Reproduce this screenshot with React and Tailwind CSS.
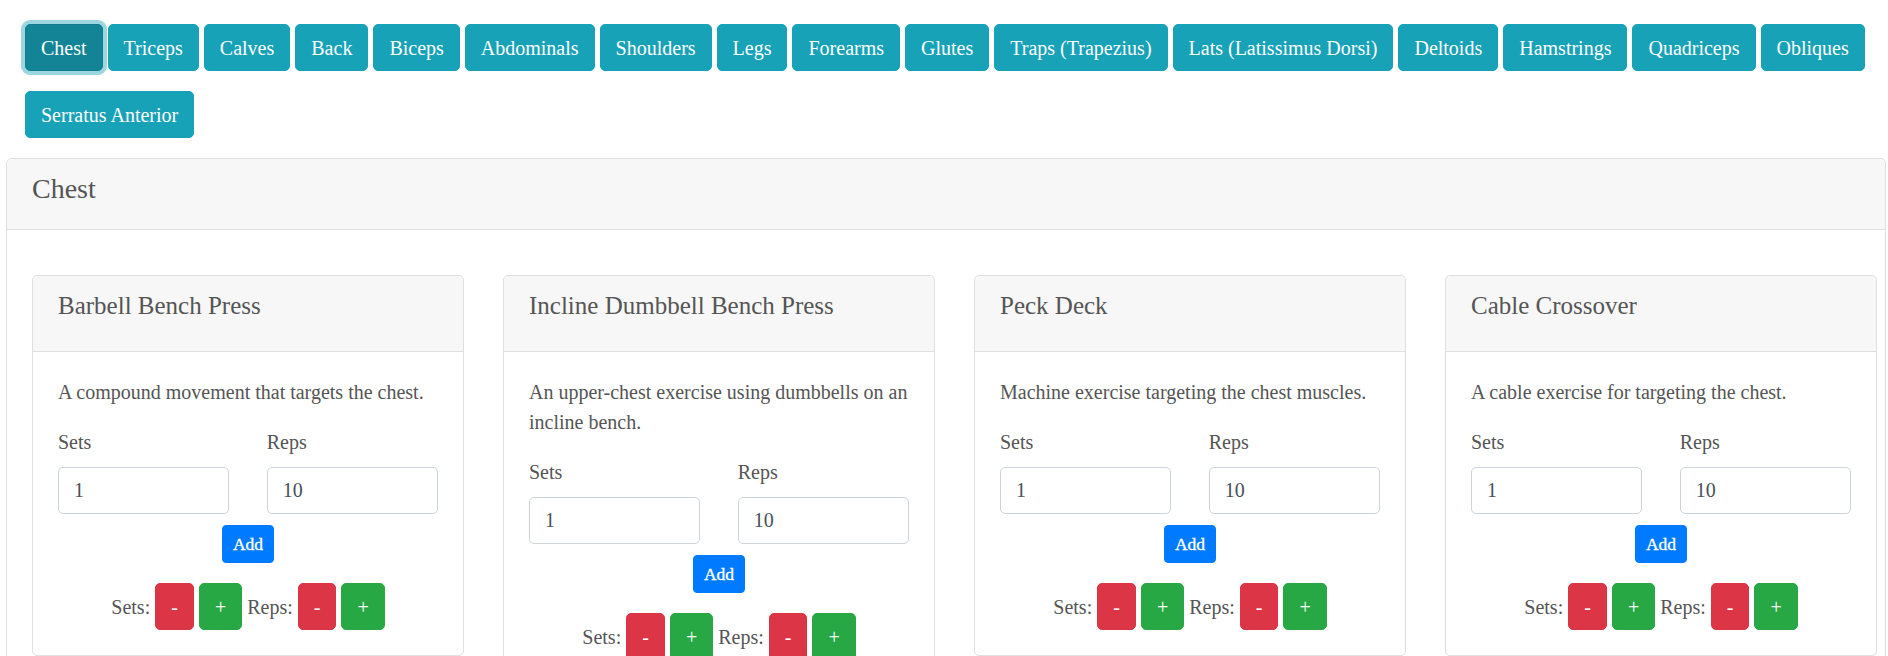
import React from "react";

const categories = [
  "Chest",
  "Triceps",
  "Calves",
  "Back",
  "Biceps",
  "Abdominals",
  "Shoulders",
  "Legs",
  "Forearms",
  "Glutes",
  "Traps (Trapezius)",
  "Lats (Latissimus Dorsi)",
  "Deltoids",
  "Hamstrings",
  "Quadriceps",
  "Obliques",
  "Serratus Anterior",
];

const exercises = [
  { name: "Barbell Bench Press", desc: "A compound movement that targets the chest." },
  { name: "Incline Dumbbell Bench Press", desc: "An upper-chest exercise using dumbbells on an incline bench." },
  { name: "Peck Deck", desc: "Machine exercise targeting the chest muscles." },
  { name: "Cable Crossover", desc: "A cable exercise for targeting the chest." },
];

function CategoryButton({ label, active }) {
  return (
    <button
      className={
        active
          ? "h-[47px] px-[15px] py-[7.5px] border border-[#117a8b] bg-[#138496] text-white rounded-[5px] leading-[30px] text-[20px] shadow-[0_0_0_4px_rgba(58,176,195,0.5)]"
          : "h-[47px] px-[15px] py-[7.5px] border border-[#17a2b8] bg-[#17a2b8] text-white rounded-[5px] leading-[30px] text-[20px]"
      }
    >
      {label}
    </button>
  );
}

function ExerciseCard({ name, desc }) {
  return (
    <div className="border border-[#dfdfdf] rounded-[5px] bg-white">
      <div className="bg-[#f7f7f7] border-b border-[#dfdfdf] rounded-t-[5px] px-[25px] pt-[15px] pb-[30px]">
        <div className="text-[25px] leading-[30px] text-[#555]">{name}</div>
      </div>
      <div className="px-[25px] pt-[25px] pb-[25px]">
        <p className="mb-[20px]">{desc}</p>
        <div className="grid grid-cols-2 gap-x-[37.5px]">
          <div>
            <div className="mb-[10px]">Sets</div>
            <input
              readOnly
              value="1"
              className="w-full h-[47px] border border-[#ced4da] rounded-[5px] px-[15px] text-[20px] text-[#495057] font-['Liberation_Serif'] outline-none"
            />
          </div>
          <div>
            <div className="mb-[10px]">Reps</div>
            <input
              readOnly
              value="10"
              className="w-full h-[47px] border border-[#ced4da] rounded-[5px] px-[15px] text-[20px] text-[#495057] font-['Liberation_Serif'] outline-none"
            />
          </div>
        </div>
        <div className="flex justify-center mt-[11px]">
          <button className="h-[38px] px-[10px] bg-[#007bff] border border-[#007bff] text-white text-[17.5px] leading-[26px] rounded-[4px] [-webkit-text-stroke:0.35px_white]">
            Add
          </button>
        </div>
        <div className="flex justify-center items-center gap-[5px] mt-[20px]">
          <span>Sets:</span>
          <button className="h-[47px] px-[15px] bg-[#dc3545] border border-[#dc3545] text-white text-[20px] leading-[30px] rounded-[5px]">-</button>
          <button className="h-[47px] px-[15px] bg-[#28a745] border border-[#28a745] text-white text-[20px] leading-[30px] rounded-[5px]">+</button>
          <span>Reps:</span>
          <button className="h-[47px] px-[15px] bg-[#dc3545] border border-[#dc3545] text-white text-[20px] leading-[30px] rounded-[5px]">-</button>
          <button className="h-[47px] px-[15px] bg-[#28a745] border border-[#28a745] text-white text-[20px] leading-[30px] rounded-[5px]">+</button>
        </div>
      </div>
    </div>
  );
}

export default function App() {
  return (
    <div className="font-['Liberation_Serif',serif] text-[20px] leading-[30px] text-[#555] bg-white min-h-screen w-[1888px] overflow-hidden">
      <div className="flex flex-wrap gap-x-[5px] gap-y-[20px] pl-[25px] pr-[6px] pt-[24px]">
        {categories.map((c, i) => (
          <CategoryButton key={c} label={c} active={i === 0} />
        ))}
      </div>
      <div className="ml-[6px] mt-[20px] w-[1880px] border border-[#dfdfdf] rounded-[5px]">
        <div className="bg-[#f7f7f7] border-b border-[#dfdfdf] rounded-t-[5px] px-[25px] pt-[13px] pb-[23px]">
          <div className="text-[28px] leading-[34px] text-[#555]">Chest</div>
        </div>
        <div className="pl-[25px] pt-[45px] pb-[25px]">
          <div className="grid grid-cols-[repeat(4,432px)] gap-x-[39px] items-start">
            {exercises.map((e) => (
              <ExerciseCard key={e.name} name={e.name} desc={e.desc} />
            ))}
          </div>
        </div>
      </div>
    </div>
  );
}
